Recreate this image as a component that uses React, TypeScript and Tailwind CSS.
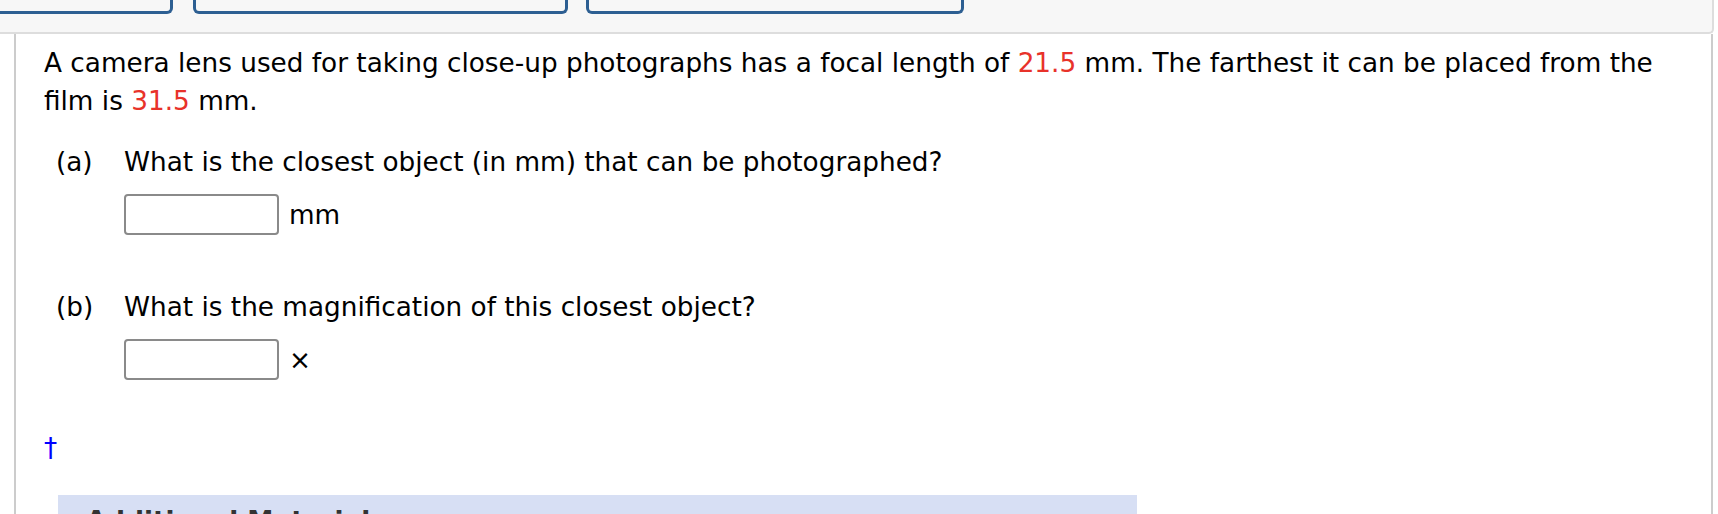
export default function App() {
  return (
    <div className="h-[514px] w-full overflow-hidden bg-white font-['DejaVu_Sans',Verdana,sans-serif] text-[26.3px] leading-[38px] text-black">
      {/* top tab strip */}
      <div className="flex h-[34px] w-[1714px] items-start overflow-hidden rounded-br-[5px] border-b-2 border-r-2 border-[#dddddd] bg-[#f7f7f7]">
        <div className="ml-[-200px] h-[14px] w-[373px] shrink-0 rounded-b-[6px] border-[3px] border-t-0 border-[#2d5f92]" />
        <div className="ml-[20px] h-[14px] w-[375px] shrink-0 rounded-b-[6px] border-[3px] border-t-0 border-[#2d5f92]" />
        <div className="ml-[18px] h-[14px] w-[378px] shrink-0 rounded-b-[6px] border-[3px] border-t-0 border-[#2d5f92]" />
      </div>

      {/* question body */}
      <div className="ml-[14px] h-[480px] w-[1699px] border-x-2 border-[#cccccc]">
        <p className="pl-[28px] pr-[40px] pt-[10px]">
          A camera lens used for taking close-up photographs has a focal length of{" "}
          <span className="text-[#e8322a]">21.5</span> mm. The farthest it can be placed from the film is{" "}
          <span className="text-[#e8322a]">31.5</span> mm.
        </p>

        <div className="mt-[23px] pl-[40px]">
          <div className="flex">
            <span className="w-[68px] shrink-0">(a)</span>
            <span>What is the closest object (in mm) that can be photographed?</span>
          </div>
          <div className="mt-[13px] flex items-center pl-[68px]">
            <input type="text" className="h-[41px] w-[155px] rounded-[4px] border-2 border-[#8a8a8a] bg-white" />
            <span className="ml-[10px]">mm</span>
          </div>
        </div>

        <div className="mt-[53px] pl-[40px]">
          <div className="flex">
            <span className="w-[68px] shrink-0">(b)</span>
            <span>What is the magnification of this closest object?</span>
          </div>
          <div className="mt-[13px] flex items-center pl-[68px]">
            <input type="text" className="h-[41px] w-[155px] rounded-[4px] border-2 border-[#8a8a8a] bg-white" />
            <span className="ml-[10px]">×</span>
          </div>
        </div>

        <div className="mt-[49px] pl-[28px] text-[#0000ff]">†</div>

        <div className="ml-[42px] mt-[28px] w-[1079px] bg-[#d7dff4] pl-[28px] pt-[7px] font-bold text-[#333333]">
          Additional Materials
        </div>
      </div>
    </div>
  );
}
